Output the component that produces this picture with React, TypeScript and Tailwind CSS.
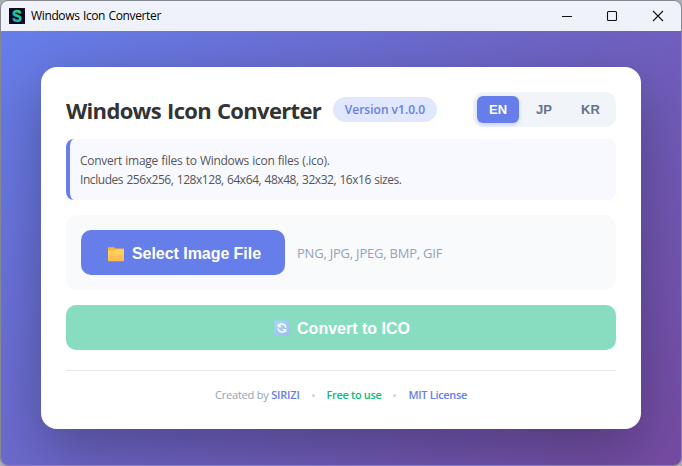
import React from "react";

function AppLogo() {
  return (
    <svg width="16" height="16" viewBox="0 0 16 16" className="shrink-0">
      <defs>
        <linearGradient id="logo" x1="0" y1="1" x2="1" y2="0">
          <stop offset="0" stopColor="#2390d8" />
          <stop offset="0.5" stopColor="#18c0b0" />
          <stop offset="1" stopColor="#28d860" />
        </linearGradient>
      </defs>
      <rect width="16" height="16" fill="#0b0a1c" />
      <path d="M0 0h3v1H0zM13 0h3v3h-1V1h-2zM0 14h2v2H0zM13 14h3v2h-3z" fill="#24102e" />
      <path d="M11.2 5.500C11 3.800 9.800 3.100 8 3.100C6 3.100 4.700 4 4.700 5.400C4.700 8.600 11.300 7 11.300 10.400C11.300 12.100 9.900 12.900 8 12.900C6 12.900 4.700 12 4.500 10.200" fill="none" stroke="url(#logo)" strokeWidth="2.600" />
      <path d="M6 5.500L10 8.500M5 12L7 13M9 3L11 4" stroke="#5cf0a0" strokeWidth=".7" opacity=".6" />
    </svg>
  );
}

function FolderIcon() {
  return (
    <svg width="16" height="15" viewBox="0 0 16 15" className="relative top-px shrink-0">
      <defs>
        <linearGradient id="folder" x1="0" y1="0" x2="0" y2="1">
          <stop offset="0" stopColor="#ffda57" />
          <stop offset="1" stopColor="#ffb653" />
        </linearGradient>
      </defs>
      <path d="M0 .8Q0 .2.6.2H6L7.800 1.500H15.300Q16 1.500 16 2.200V6H0Z" fill="#f9b43e" />
      <path d="M0 3.600H6L7.800 2.400H16V13.500Q16 14.200 15.300 14.200H.7Q0 14.200 0 13.500Z" fill="url(#folder)" />
    </svg>
  );
}

function RefreshIcon() {
  return (
    <svg width="16" height="16" viewBox="0 0 16 16" className="shrink-0">
      <defs>
        <linearGradient id="refresh" x1="0" y1="0" x2="1" y2="1">
          <stop offset="0" stopColor="#a6d8f6" />
          <stop offset="1" stopColor="#9fbcf3" />
        </linearGradient>
      </defs>
      <rect x=".2" y=".4" width="15.600" height="15.400" rx="1" fill="url(#refresh)" />
      <g fill="none" stroke="#fff" strokeWidth="1.500">
        <path d="M5.200 5.200C7 3.300 11.200 3.500 12 7.500" />
        <path d="M10.800 11C9 12.800 4.800 12.500 4 8.700" />
      </g>
      <path d="M3.700 3.200V7.300H7.800ZM12.300 13V8.900H8.200Z" fill="#fff" />
    </svg>
  );
}

function TitleBar() {
  return (
    <header className="flex h-[30px] shrink-0 items-center bg-[#eff3f9] pl-2">
      <AppLogo />
      <span className="ml-1.5 whitespace-nowrap text-[12px] leading-4 tracking-[-0.360px] text-black [word-spacing:0.6px]">Windows Icon Converter</span>
      <div className="ml-auto flex h-full">
        {["minimize", "maximize", "close"].map((name) => (
          <button key={name} aria-label={name} className="flex h-full w-[46px] items-center justify-center">
            <svg width="12" height="12" viewBox="0 0 12 12" fill="none" stroke="#111" strokeWidth="1.100">
              {name === "minimize" && <path d="M2 6.500H12" />}
              {name === "maximize" && <rect x="1.500" y="1.500" width="9" height="9" rx="1" />}
              {name === "close" && <path d="M1 1L11 11M11 1L1 11" />}
            </svg>
          </button>
        ))}
      </div>
    </header>
  );
}

function LanguageSwitch() {
  return (
    <div className="ml-auto flex h-[35px] w-[143px] gap-1 rounded-[10px] bg-[#f1f5f9] p-1 font-['Liberation_Sans',sans-serif] text-[13px] font-bold text-[#64748b]">
      <button className="w-[42px] rounded-md bg-[#667eea] text-white shadow-[0_2px_4px_rgba(102,126,234,0.3)]">EN</button>
      <button className="w-[42px] rounded-md">JP</button>
      <button className="w-[43px] rounded-md">KR</button>
    </div>
  );
}

export default function App() {
  return (
    <div className="h-[466px] w-[682px] overflow-hidden bg-[#a9adb3] font-['Open_Sans',sans-serif]">
      <div className="flex h-full w-full flex-col overflow-hidden rounded-lg border border-[#85898f]">
        <TitleBar />
        <main className="flex-1 bg-[linear-gradient(135deg,#667eea_0%,#764ba2_100%)] px-10 pt-9">
          <section className="h-[362px] w-[600px] rounded-2xl bg-white p-[25px] shadow-[0_20px_60px_rgba(0,0,0,0.3)]">
            <div className="flex h-[35px] items-center">
              <h1 className="w-[267px] whitespace-nowrap pt-0.5 text-[22px] font-bold leading-[35px] tracking-[-0.680px] text-[#333] [word-spacing:1px]">Windows Icon Converter</h1>
              <span className="flex h-[25px] w-[104px] items-center justify-center whitespace-nowrap rounded-full bg-[#e0e7ff] pt-px text-[12px] font-semibold text-[#667eea]">Version v1.0.0</span>
              <LanguageSwitch />
            </div>
            <p className="mt-3 h-[61px] whitespace-nowrap rounded-lg border-l-4 border-[#667eea] bg-[#f8f9ff] py-[12px] pl-[10px] text-[12px] leading-[19px] text-[#555]">
              <span className="block tracking-[-0.290px] [word-spacing:0.5px]">Convert image files to Windows icon files (.ico).</span>
              <span className="block tracking-[-0.440px] [word-spacing:0.6px]">Includes 256x256, 128x128, 64x64, 48x48, 32x32, 16x16 sizes.</span>
            </p>
            <div className="mt-[15px] flex h-[75px] items-center rounded-xl bg-[#f8fafc] px-[15px]">
              <button className="flex h-[45px] w-[204px] items-center rounded-[10px] bg-[#667eea] pl-[27px] pt-0.5 font-['Liberation_Sans',sans-serif] text-[16px] font-bold text-white">
                <FolderIcon />
                <span className="ml-2 whitespace-nowrap tracking-[-0.050px]">Select Image File</span>
              </button>
              <span className="ml-3 whitespace-nowrap pt-0.5 text-[13px] tracking-[-0.220px] text-[#94a3b8]">PNG, JPG, JPEG, BMP, GIF</span>
            </div>
            <button className="mt-[15px] flex h-[45px] w-full items-center justify-center gap-[7px] rounded-[10px] bg-[#88dcc0] pl-[2px] pt-px font-['Liberation_Sans',sans-serif] text-[16px] font-bold text-white">
              <RefreshIcon />
              <span className="pt-px">Convert to ICO</span>
            </button>
            <footer className="mt-5 flex items-center justify-center border-t border-[#e5e5e5] pt-4 text-[11px] leading-4 text-[#94a3b8]">
              <span className="whitespace-nowrap tracking-[-0.200px]">Created by <b className="font-semibold text-[#667eea]">SIRIZI</b></span>
              <i className="mx-[12px] size-[3px] rounded-full bg-[#cbd5e1]" />
              <span className="font-semibold tracking-[-0.350px] text-[#10b981]">Free to use</span>
              <i className="mx-[12px] size-[3px] rounded-full bg-[#cbd5e1]" />
              <span className="font-semibold tracking-[-0.320px] text-[#667eea]">MIT License</span>
            </footer>
          </section>
        </main>
      </div>
    </div>
  );
}
